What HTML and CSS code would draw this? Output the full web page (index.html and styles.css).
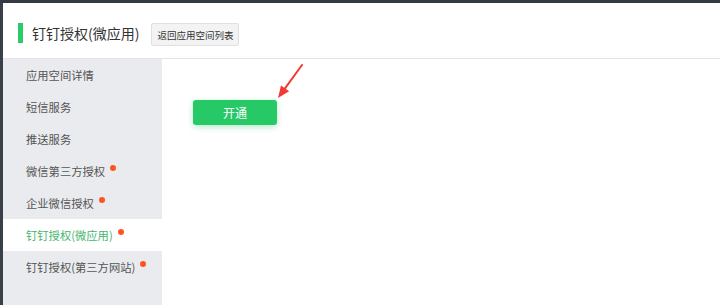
FILE: index.html
```html
<!DOCTYPE html>
<html lang="zh-CN">
<head>
<meta charset="utf-8">
<title>钉钉授权(微应用)</title>
<link rel="stylesheet" href="styles.css">
</head>
<body>
<div class="topbar"></div>
<div class="frame">
  <div class="edge"></div>
  <div class="page">
    <header class="header">
      <span class="mark"></span>
      <h1 class="title">钉钉授权(微应用)</h1>
      <button class="back">返回应用空间列表</button>
    </header>
    <div class="body">
      <nav class="sidebar">
        <a class="item">应用空间详情</a>
        <a class="item">短信服务</a>
        <a class="item">推送服务</a>
        <a class="item">微信第三方授权<i class="dot"></i></a>
        <a class="item">企业微信授权<i class="dot"></i></a>
        <a class="item active">钉钉授权(微应用)<i class="dot"></i></a>
        <a class="item">钉钉授权(第三方网站)<i class="dot"></i></a>
      </nav>
      <main class="main">
        <button class="open">开通</button>
        <svg class="arrow" width="44" height="40" viewBox="0 0 44 40">
          <path d="M40 1 L23 24.3" stroke="#f23a35" stroke-width="2" fill="none" stroke-linecap="round"/>
          <path d="M16 34 L19 21.4 L27.1 27.2 Z" fill="#f23a35"/>
        </svg>
      </main>
    </div>
  </div>
</div>
</body>
</html>
```
FILE: styles.css
```css
* { box-sizing: border-box; }
html, body { margin: 0; padding: 0; }
body {
  width: 720px;
  height: 305px;
  overflow: hidden;
  font-family: "Noto Sans CJK SC", "Noto Sans", sans-serif;
  background: #fff;
  display: flex;
  flex-direction: column;
}
.topbar {
  height: 3px;
  background: #353b42;
  flex: none;
}
.frame {
  flex: 1;
  display: flex;
  min-height: 0;
}
.edge {
  width: 3px;
  background: #3a4047;
  flex: none;
}
.page {
  flex: 1;
  display: flex;
  flex-direction: column;
  min-width: 0;
}
.header {
  height: 56px;
  border-bottom: 1px solid #e4e4e4;
  display: flex;
  align-items: center;
  padding: 5px 0 0 15px;
  flex: none;
}
.mark {
  width: 5px;
  height: 20px;
  background: #2bcb68;
  margin-right: 9px;
}
.title {
  margin: 0;
  font-size: 14px;
  font-weight: normal;
  color: #333;
}
.back {
  margin-left: 12px;
  width: 88px;
  height: 23px;
  padding: 0;
  border: 1px solid #e0e0e0;
  background: #f3f3f3;
  border-radius: 2px;
  font-family: inherit;
  font-size: 9.5px;
  color: #333;
  margin-top: 3px;
}
.body {
  flex: 1;
  display: flex;
  min-height: 0;
}
.sidebar {
  width: 159px;
  background: #e9ebef;
  display: flex;
  flex-direction: column;
  flex: none;
}
.item {
  height: 32px;
  display: flex;
  align-items: center;
  padding-left: 23px;
  font-size: 11.3px;
  color: #555;
}
.item.active {
  background: #fff;
  color: #45b56e;
}
.dot {
  width: 6px;
  height: 6px;
  border-radius: 50%;
  background: #ff5420;
  margin-left: 5px;
  margin-top: -6px;
}
.main {
  flex: 1;
  position: relative;
  padding: 40px 0 0 31px;
}
.open {
  width: 84px;
  height: 25px;
  border: none;
  border-radius: 3px;
  background: #27c967;
  color: #fff;
  font-family: inherit;
  font-size: 12px;
  box-shadow: 0 2px 6px rgba(39, 201, 103, 0.35);
}
.arrow {
  position: absolute;
  left: 100px;
  top: 5px;
}
```
